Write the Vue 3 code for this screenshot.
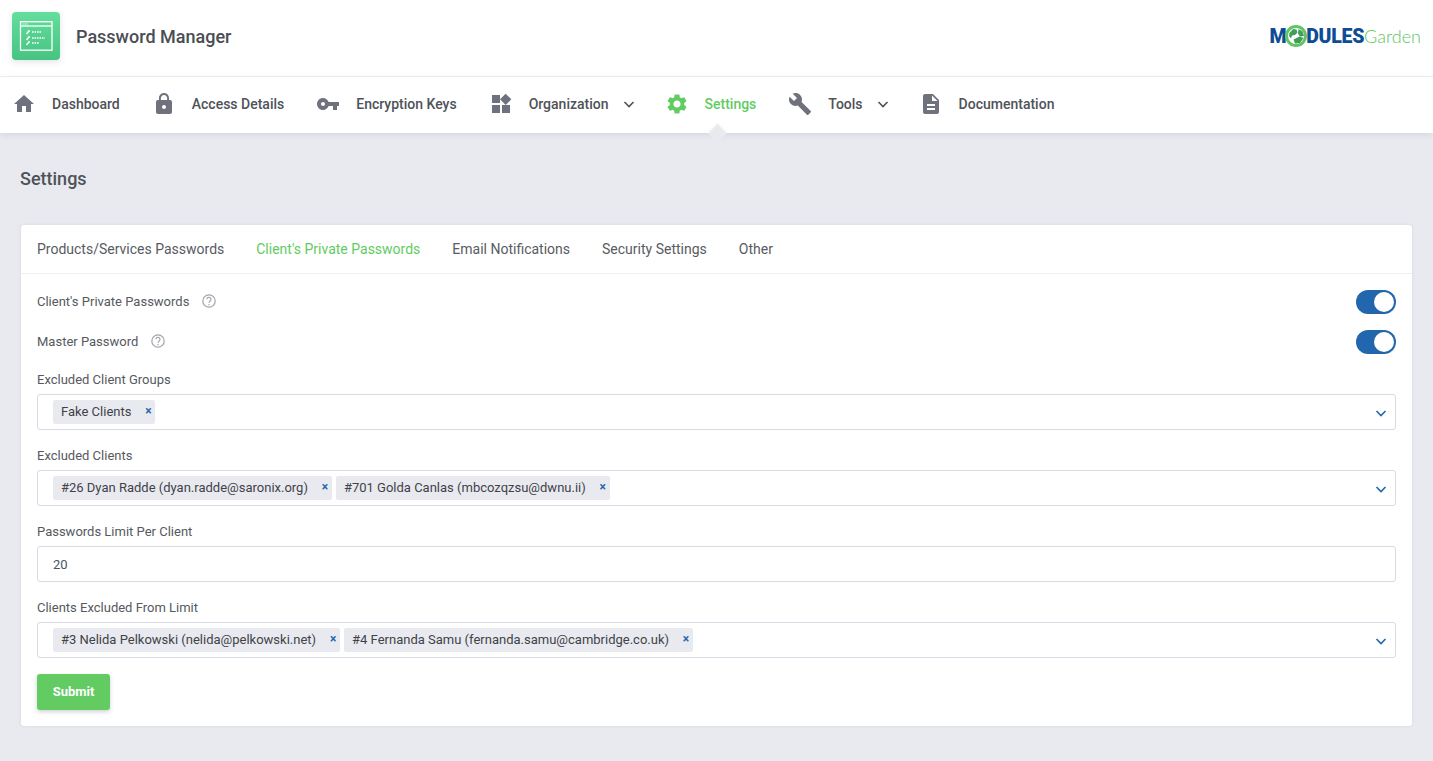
<template>
  <div class="page">
    <header class="top-bar">
      <div class="brand">
        <div class="app-icon">
          <svg width="48" height="48" viewBox="0 0 48 48" fill="none" stroke="#fff">
            <rect x="8.500" y="9.700" width="31.500" height="28.500" stroke-width="1.300" />
            <path d="M8.500 14h31.500" stroke-width="1.300" />
            <path d="M10.500 12h6" stroke-width="1" stroke-dasharray="1.200 .8" />
            <g v-for="row in keyRows" :key="row.y">
              <path :d="`M14.500 ${row.y + 2}l2-2.500`" stroke-width="1.400" />
              <circle :cx="17" :cy="row.y - 1" r="1.100" fill="#fff" stroke="none" />
              <path :d="`M20 ${row.y}h${row.w}`" stroke-width="1.700" stroke-dasharray="1.600 .9" />
            </g>
          </svg>
        </div>
        <span class="app-title">Password Manager</span>
      </div>
      <div class="mg-logo">
        <span class="mg-blue">M</span>
        <svg class="mg-globe" width="22" height="22" viewBox="0 0 22 22">
          <circle cx="11" cy="11" r="9.500" fill="#fff" stroke="#62c462" stroke-width="3" />
          <path d="M4.500 8l3.500-4 3.500.5 1 3-2.500 2.500-3 .5-1 3-2-2.500zM13.500 4l4 2.500 1.500 4.500-4 .5-2-3zM8.500 14.500l6-3 4 1.500-3.500 5-5 .5z" fill="#3f9f5a" />
        </svg>
        <span class="mg-blue">DULES</span><span class="mg-green">Garden</span>
      </div>
    </header>

    <nav class="main-nav">
      <a v-for="item in navItems" :key="item.label" class="nav-item" :class="{ active: item.active }">
        <svg class="nav-icon" width="24" height="24" viewBox="0 0 24 24"><path :d="item.icon" /></svg>
        <span>{{ item.label }}</span>
        <svg v-if="item.sub" class="nav-chevron" width="16" height="16" viewBox="0 0 16 16">
          <path d="M3.500 6l4.500 4.500L12.500 6" />
        </svg>
      </a>
    </nav>

    <main class="content">
      <h1 class="page-title">Settings</h1>

      <section class="card">
        <div class="tabs">
          <a v-for="tab in tabs" :key="tab" class="tab" :class="{ active: tab === activeTab }" @click="activeTab = tab">{{ tab }}</a>
        </div>

        <div class="card-body">
          <div class="switch-row">
            <span class="label">Client's Private Passwords</span>
            <svg class="help" width="16" height="16" viewBox="0 0 16 16">
              <circle cx="8" cy="8" r="6.200" />
              <path d="M6 6.300a2 2 0 1 1 3.200 1.600C8.400 8.500 8 8.800 8 9.800" />
              <path d="M8 11v1.200" />
            </svg>
            <label class="switch"><input v-model="privateOn" type="checkbox" /><i></i></label>
          </div>
          <div class="switch-row">
            <span class="label">Master Password</span>
            <svg class="help" width="16" height="16" viewBox="0 0 16 16">
              <circle cx="8" cy="8" r="6.200" />
              <path d="M6 6.300a2 2 0 1 1 3.200 1.600C8.400 8.500 8 8.800 8 9.800" />
              <path d="M8 11v1.200" />
            </svg>
            <label class="switch"><input v-model="masterOn" type="checkbox" /><i></i></label>
          </div>

          <div v-for="field in fields" :key="field.label" class="field">
            <div class="label field-label">{{ field.label }}</div>
            <div v-if="field.chips" class="select">
              <span v-for="chip in field.chips" :key="chip" class="chip">
                {{ chip }}<b class="chip-x">×</b>
              </span>
              <svg class="select-arrow" width="16" height="16" viewBox="0 0 16 16">
                <path d="M3.500 6l4.500 4.500L12.500 6" />
              </svg>
            </div>
            <input v-else class="text-input" type="text" :value="field.value" />
          </div>

          <button class="submit" type="button">Submit</button>
        </div>
      </section>
    </main>
  </div>
</template>

<script setup>
import { ref } from 'vue'

const keyRows = [
  { y: 20, w: 10 },
  { y: 26, w: 13 },
  { y: 31, w: 7 }
]

const navItems = [
  { label: 'Dashboard', icon: 'M10 20v-6h4v6h5v-8h3L12 3 2 12h3v8z' },
  {
    label: 'Access Details',
    icon: 'M18 8h-1V6c0-2.760-2.240-5-5-5S7 3.240 7 6v2H6c-1.100 0-2 .9-2 2v10c0 1.100.9 2 2 2h12c1.100 0 2-.9 2-2V10c0-1.100-.9-2-2-2zm-6 9c-1.100 0-2-.9-2-2s.9-2 2-2 2 .9 2 2-.9 2-2 2zm3.100-9H8.900V6c0-1.710 1.390-3.100 3.100-3.100 1.710 0 3.100 1.390 3.100 3.100v2z'
  },
  {
    label: 'Encryption Keys',
    icon: 'M12.650 10C11.830 7.670 9.610 6 7 6c-3.310 0-6 2.690-6 6s2.690 6 6 6c2.610 0 4.830-1.670 5.650-4H17v4h4v-4h2v-4H12.650zM7 14c-1.100 0-2-.9-2-2s.9-2 2-2 2 .9 2 2-.9 2-2 2z'
  },
  {
    label: 'Organization',
    sub: true,
    icon: 'M13 13v8h8v-8h-8zM3 21h8v-8H3v8zM3 3v8h8V3H3zm13.660-1.310L11 7.340 16.660 13l5.660-5.660-5.660-5.650z'
  },
  {
    label: 'Settings',
    active: true,
    icon: 'M19.140 12.940c.04-.3.060-.61.060-.94 0-.32-.02-.64-.07-.94l2.030-1.580c.18-.14.23-.41.120-.61l-1.920-3.320c-.12-.22-.37-.29-.59-.22l-2.390.96c-.5-.38-1.030-.7-1.620-.94l-.36-2.540c-.04-.24-.24-.41-.48-.41h-3.840c-.24 0-.43.170-.47.410l-.36 2.540c-.59.240-1.130.570-1.620.94l-2.390-.96c-.22-.08-.47 0-.59.220L2.740 8.870c-.12.210-.08.470.12.610l2.030 1.580c-.05.3-.09.630-.09.940s.02.640.07.940l-2.030 1.580c-.18.140-.23.410-.12.610l1.920 3.320c.12.220.37.290.59.220l2.390-.96c.5.380 1.030.7 1.620.94l.36 2.540c.05.240.24.410.48.410h3.840c.24 0 .44-.17.470-.41l.36-2.540c.59-.24 1.130-.56 1.620-.94l2.390.96c.22.080.47 0 .59-.22l1.920-3.320c.12-.22.070-.47-.12-.61l-2.010-1.580zM12 15.600c-1.980 0-3.600-1.620-3.600-3.600s1.620-3.600 3.600-3.600 3.600 1.620 3.600 3.600-1.620 3.600-3.600 3.600z'
  },
  {
    label: 'Tools',
    sub: true,
    icon: 'M22.700 19l-9.100-9.100c.9-2.300.4-5-1.500-6.900-2-2-5-2.400-7.400-1.300L9 6 6 9 1.600 4.700C.4 7.100.9 10.100 2.900 12.100c1.900 1.900 4.600 2.400 6.900 1.500l9.100 9.100c.4.400 1 .4 1.400 0l2.300-2.300c.5-.4.500-1.100.1-1.400z'
  },
  {
    label: 'Documentation',
    icon: 'M14 2H6c-1.100 0-1.990.9-1.990 2L4 20c0 1.100.89 2 1.990 2H18c1.100 0 2-.9 2-2V8l-6-6zm2 16H8v-2h8v2zm0-4H8v-2h8v2zm-3-5V3.500L18.500 9H13z'
  }
]

const tabs = [
  'Products/Services Passwords',
  "Client's Private Passwords",
  'Email Notifications',
  'Security Settings',
  'Other'
]
const activeTab = ref("Client's Private Passwords")

const privateOn = ref(true)
const masterOn = ref(true)

const fields = [
  { label: 'Excluded Client Groups', chips: ['Fake Clients'] },
  {
    label: 'Excluded Clients',
    chips: ['#26 Dyan Radde (dyan.radde@saronix.org)', '#701 Golda Canlas (mbcozqzsu@dwnu.ii)']
  },
  { label: 'Passwords Limit Per Client', value: '20' },
  {
    label: 'Clients Excluded From Limit',
    chips: ['#3 Nelida Pelkowski (nelida@pelkowski.net)', '#4 Fernanda Samu (fernanda.samu@cambridge.co.uk)']
  }
]
</script>

<style>
html,
body {
  margin: 0;
  background: #e9eaf0;
}
</style>

<style scoped>
.page {
  min-height: 761px;
  background: #e9eaf0;
  font-family: Roboto, "Liberation Sans", sans-serif;
  color: #4f5259;
}

.top-bar {
  display: flex;
  align-items: flex-start;
  justify-content: space-between;
  box-sizing: border-box;
  height: 77px;
  padding: 12px 12px 0;
  background: #fff;
  border-bottom: 1px solid #eeeff3;
}
.brand {
  display: flex;
  align-items: center;
  gap: 16px;
}
.app-icon {
  width: 48px;
  height: 48px;
  border-radius: 4px;
  background: linear-gradient(180deg, #63de9c, #47c382);
  box-shadow: 0 2px 6px rgba(80, 90, 110, 0.16);
}
.app-title {
  font-size: 18px;
  font-weight: 500;
  color: #4a4d54;
}

.mg-logo {
  display: flex;
  align-items: center;
  height: 48px;
  font-family: Roboto, sans-serif;
  font-size: 19.500px;
  line-height: 23px;
}
.mg-blue {
  font-weight: 900;
  color: #0f4c96;
  letter-spacing: -0.3px;
}
.mg-globe {
  margin: 0 -1px;
}
.mg-green {
  font-family: Lato, sans-serif;
  font-weight: 300;
  font-size: 18px;
  color: #62c462;
}

.main-nav {
  position: relative;
  display: flex;
  gap: 32px;
  box-sizing: border-box;
  height: 56px;
  padding: 0 12px 2px;
  background: #fff;
  box-shadow: 0 2px 6px rgba(80, 90, 110, 0.12);
}
.nav-item {
  position: relative;
  display: flex;
  align-items: center;
  font-size: 14px;
  font-weight: 500;
  color: #4f5259;
  cursor: pointer;
}
.nav-icon {
  margin-right: 16px;
  fill: #6f727d;
}
.nav-chevron {
  margin-left: 12px;
  margin-right: -4px;
  fill: none;
  stroke: #4f5259;
  stroke-width: 1.600;
}
.nav-item.active {
  color: #62cb62;
}
.nav-item.active .nav-icon {
  fill: #62cb62;
}
.nav-item.active::after {
  content: "";
  position: absolute;
  left: 46px;
  bottom: -9px;
  width: 13px;
  height: 13px;
  background: #e9eaf0;
  transform: rotate(45deg);
  box-shadow: -1px -1px 2px rgba(80, 90, 110, 0.07);
}

.content {
  padding: 0 21px 35px;
}
.page-title {
  margin: 0 0 0 -1px;
  padding: 35px 0 35px;
  font-size: 18px;
  line-height: 22px;
  font-weight: 500;
  color: #4f5259;
}

.card {
  background: #fff;
  border-radius: 3px;
  box-shadow: 0 0 3px rgba(80, 90, 110, 0.14);
}
.tabs {
  display: flex;
  gap: 32px;
  height: 48px;
  padding: 0 16px;
  align-items: center;
  border-bottom: 1px solid #eeeff3;
}
.tab {
  font-size: 14px;
  color: #585b62;
  cursor: pointer;
}
.tab.active {
  color: #62cb62;
}

.card-body {
  padding: 16px;
}
.label {
  font-size: 13px;
  line-height: 19px;
  color: #565960;
}
.switch-row {
  display: flex;
  align-items: center;
  height: 24px;
  margin-bottom: 16px;
}
.switch-row .label {
  margin-top: -2px;
}
.help {
  margin-left: 12px;
  margin-top: -2px;
  fill: none;
  stroke: #a3a5ad;
  stroke-width: 1.200;
}
.switch {
  position: relative;
  margin-left: auto;
  width: 40px;
  height: 24px;
  cursor: pointer;
}
.switch input {
  position: absolute;
  opacity: 0;
}
.switch i {
  position: absolute;
  inset: 0;
  border-radius: 12px;
  background: #c9ccd6;
}
.switch i::after {
  content: "";
  position: absolute;
  top: 2px;
  left: 2px;
  width: 20px;
  height: 20px;
  border-radius: 50%;
  background: #fff;
}
.switch input:checked + i {
  background: #2267ad;
}
.switch input:checked + i::after {
  left: 18px;
}

.field {
  margin-bottom: 16px;
}
.field-label {
  margin-bottom: 5px;
}
.select {
  position: relative;
  display: flex;
  align-items: center;
  gap: 4px;
  box-sizing: border-box;
  height: 36px;
  padding: 0 15px;
  border: 1px solid #d9dae6;
  border-radius: 3px;
  background: #fff;
}
.chip {
  display: flex;
  align-items: center;
  height: 24px;
  padding: 0 0 2px 8px;
  box-sizing: border-box;
  border-radius: 2px;
  background: #e9eaf0;
  font-size: 13px;
  color: #3f4248;
}
.chip-x {
  width: 24px;
  padding-left: 10px;
  box-sizing: border-box;
  text-align: center;
  font-size: 12px;
  color: #2267ad;
}
.select-arrow {
  position: absolute;
  right: 6px;
  top: 10px;
  fill: none;
  stroke: #2267ad;
  stroke-width: 1.600;
}
.text-input {
  display: block;
  box-sizing: border-box;
  width: 100%;
  height: 36px;
  padding: 0 15px;
  border: 1px solid #d9dae6;
  border-radius: 3px;
  outline: none;
  font-family: inherit;
  font-size: 13px;
  color: #4a5563;
}

.submit {
  display: block;
  width: 73px;
  height: 36px;
  padding: 0 0 2px;
  border: 0;
  border-radius: 3px;
  background: #62cb62;
  box-shadow: 0 2px 4px rgba(70, 80, 100, 0.25);
  font-family: inherit;
  font-size: 13px;
  font-weight: 700;
  color: #fff;
}
</style>
